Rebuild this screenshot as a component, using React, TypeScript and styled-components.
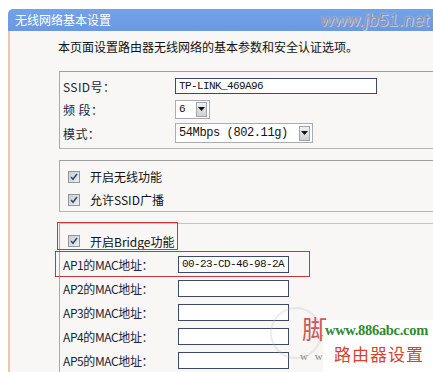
import React from "react";
import styled, { createGlobalStyle } from "styled-components";

const GlobalStyle = createGlobalStyle`
  html, body {
    margin: 0;
    padding: 0;
    background: #ffffff;
  }
  body {
    font-family: "Noto Sans CJK SC", "Liberation Sans", sans-serif;
    font-size: 12px;
    color: #000;
  }
`;

const cjk = `"Noto Sans CJK SC", "Liberation Sans", sans-serif`;
const mono = `"Liberation Mono", "Noto Sans CJK SC", monospace`;

const CheckMark = () => (
  <svg width="8" height="8" viewBox="0 0 8 8">
    <path d="M1 4 L3 6.3 L7 1" fill="none" stroke="#3d4a63" strokeWidth="1.6" />
  </svg>
);

const ArrowDown = () => (
  <svg width="7" height="4" viewBox="0 0 7 4">
    <path d="M0 0 H7 L3.5 4 Z" fill="#111" />
  </svg>
);

const App: React.FC = () => {
  const apRows = ["AP1", "AP2", "AP3", "AP4", "AP5"];
  const macs = ["00-23-CD-46-98-2A", "", "", "", ""];

  return (
    <Page>
      <GlobalStyle />
      <Panel>
        <TitleBar>
          <TitleText>无线网络基本设置</TitleText>
          <SiteMark>www.jb51.net</SiteMark>
        </TitleBar>
        <Body>
          <Intro>本页面设置路由器无线网络的基本参数和安全认证选项。</Intro>

          <Group $pad="3px 0 3px 3px">
            <Row $height={22}>
              <Label $width={112}>SSID号：</Label>
              <TextInput $width={202} readOnly value="TP-LINK_469A96" />
            </Row>
            <Row $height={24}>
              <Label $width={112}>频&nbsp;段：</Label>
              <SelectBox $width={35} $height={19}>
                <SelectValue>6</SelectValue>
                <DropButton>
                  <ArrowDown />
                </DropButton>
              </SelectBox>
            </Row>
            <Row $height={24}>
              <Label $width={112}>模式：</Label>
              <SelectBox $width={138} $height={20}>
                <SelectValue $wide>54Mbps (802.11g)</SelectValue>
                <DropButton>
                  <ArrowDown />
                </DropButton>
              </SelectBox>
            </Row>
          </Group>

          <Group $pad="4px 0 0 3px">
            <Row $height={23}>
              <CheckBox>
                <CheckMark />
              </CheckBox>
              <CheckText>开启无线功能</CheckText>
            </Row>
            <Row $height={23}>
              <CheckBox>
                <CheckMark />
              </CheckBox>
              <CheckText>允许SSID广播</CheckText>
            </Row>
          </Group>

          <Group $pad="6px 0 0 3px" $open>
            <Row $height={22}>
              <CheckBox>
                <CheckMark />
              </CheckBox>
              <CheckText>开启Bridge功能</CheckText>
            </Row>
            {apRows.map((ap, i) => (
              <Row key={ap} $height={24}>
                <Label $width={115} $narrow>
                  {ap}的MAC地址：
                </Label>
                <TextInput $width={111} $height={17} readOnly value={macs[i]} />
              </Row>
            ))}
            <Highlight style={{ left: -3, top: -2, width: 121, height: 28 }} />
            <Highlight style={{ left: -5, top: 27, width: 255, height: 26 }} />
          </Group>
        </Body>
      </Panel>

      <SiteBadge>
        <SealRing />
        <BigChar>脚</BigChar>
        <TinyMark>w w</TinyMark>
        <BadgeCard>
          <BadgeUrl>www.886abc.com</BadgeUrl>
          <BadgeTitle>路由器设置</BadgeTitle>
        </BadgeCard>
      </SiteBadge>
    </Page>
  );
};

export default App;

const Page = styled.div`
  position: relative;
  width: 433px;
  height: 372px;
  overflow: hidden;
  padding: 9px 0 0 8px;
  box-sizing: border-box;
`;

const Panel = styled.div`
  width: 440px;
  display: flex;
  flex-direction: column;
`;

const TitleBar = styled.div`
  height: 22px;
  display: flex;
  align-items: center;
  justify-content: space-between;
  background: linear-gradient(#74a2e8, #6a99e2);
  border-top-left-radius: 5px;
  padding: 0 19px 0 7px;
`;

const TitleText = styled.span`
  color: #ffffff;
  font-family: ${cjk};
  font-size: 12px;
  line-height: 14px;
`;

const SiteMark = styled.span`
  font-family: "Liberation Sans", sans-serif;
  font-size: 18px;
  letter-spacing: 0.1px;
  color: #8391ab;
  text-shadow: 0 0 1px #dfe8f7, 1px 1px 0 #b8c6de;
  transform: skewX(-6deg);
  margin-top: 1px;
`;

const Body = styled.div`
  display: flex;
  flex-direction: column;
  border-left: 2px solid #eccaa0;
  background: #f8f7f5;
  padding: 8px 0 40px 49px;
  min-height: 360px;
`;

const Intro = styled.p`
  margin: 0 0 16px -1px;
  font-family: ${cjk};
  font-size: 12px;
  line-height: 16px;
  color: #111;
`;

const Group = styled.div<{ $pad: string; $open?: boolean }>`
  position: relative;
  display: flex;
  flex-direction: column;
  border: 1px solid #a9a9a9;
  border-right: none;
  border-top-color: ${(p) => (p.$open ? "#c4c4c4" : "#9f9f9f")};
  border-bottom-color: #b4b4b4;
  padding: ${(p) => p.$pad};
  margin-bottom: 11px;
`;

const Row = styled.div<{ $height: number }>`
  height: ${(p) => p.$height}px;
  display: flex;
  align-items: center;
`;

const Label = styled.span<{ $width: number; $narrow?: boolean }>`
  width: ${(p) => p.$width}px;
  flex-shrink: 0;
  font-family: ${cjk};
  font-size: 12px;
  letter-spacing: ${(p) => (p.$narrow ? "-0.4px" : "0.4px")};
  color: #1c2433;
`;

const TextInput = styled.input<{ $width: number; $height?: number }>`
  width: ${(p) => p.$width}px;
  height: ${(p) => p.$height ?? 16}px;
  box-sizing: border-box;
  border: 1px solid #3b4a66;
  background: #ffffff;
  padding: 0 3px;
  margin: 0;
  font-family: ${mono};
  font-size: 11px;
  letter-spacing: -0.6px;
  color: #111;
  outline: none;
`;

const SelectBox = styled.div<{ $width: number; $height: number }>`
  width: ${(p) => p.$width}px;
  height: ${(p) => p.$height}px;
  box-sizing: border-box;
  display: flex;
  align-items: center;
  justify-content: space-between;
  border: 1px solid #a7adb5;
  background: #ffffff;
  padding: 1px 2px 1px 3px;
`;

const SelectValue = styled.span<{ $wide?: boolean }>`
  font-family: ${mono};
  font-size: ${(p) => (p.$wide ? "12px" : "11px")};
  letter-spacing: ${(p) => (p.$wide ? "-0.4px" : "0")};
  color: #111;
  white-space: pre;
`;

const DropButton = styled.span`
  width: 11px;
  height: 15px;
  box-sizing: border-box;
  display: flex;
  align-items: center;
  justify-content: center;
  border: 1px solid #9ea4ab;
  background: linear-gradient(#f0f0f0, #cfd0d2);
`;

const CheckBox = styled.span`
  width: 12px;
  height: 12px;
  box-sizing: border-box;
  margin-left: 5px;
  margin-right: 10px;
  display: flex;
  align-items: center;
  justify-content: center;
  border: 1px solid #8f969f;
  background: linear-gradient(135deg, #c9ccd2, #eef0f3);
`;

const CheckText = styled.span`
  font-family: ${cjk};
  font-size: 12px;
  color: #111;
`;

const Highlight = styled.div`
  position: absolute;
  box-sizing: border-box;
  border: 1px solid #c8363a;
  pointer-events: none;
`;

const SiteBadge = styled.div`
  position: absolute;
  left: 290px;
  top: 305px;
  width: 143px;
  height: 67px;
`;

const SealRing = styled.div`
  position: absolute;
  left: -20px;
  top: 2px;
  width: 48px;
  height: 48px;
  border-radius: 50%;
  border: 2px solid rgba(180, 180, 180, 0.25);
`;

const BigChar = styled.span`
  position: absolute;
  left: 12px;
  top: 8px;
  font-family: ${cjk};
  font-size: 26px;
  line-height: 30px;
  color: #c85a5a;
`;

const TinyMark = styled.span`
  position: absolute;
  left: 10px;
  top: 45px;
  font-family: "Liberation Serif", serif;
  font-size: 11px;
  color: #888;
  letter-spacing: 2px;
`;

const BadgeCard = styled.div`
  position: absolute;
  left: 33px;
  top: 15px;
  width: 110px;
  height: 54px;
  background: #ffffff;
  display: flex;
  flex-direction: column;
  align-items: flex-start;
  padding: 1px 0 0 2px;
  box-sizing: border-box;
`;

const BadgeUrl = styled.span`
  font-family: "Liberation Serif", serif;
  font-weight: bold;
  font-size: 14.5px;
  line-height: 18px;
  letter-spacing: -0.3px;
  color: #2f8a2f;
`;

const BadgeTitle = styled.span`
  font-family: ${cjk};
  font-size: 17px;
  line-height: 24px;
  letter-spacing: 1px;
  color: #d2452c;
  margin: 3px 0 0 9px;
`;
